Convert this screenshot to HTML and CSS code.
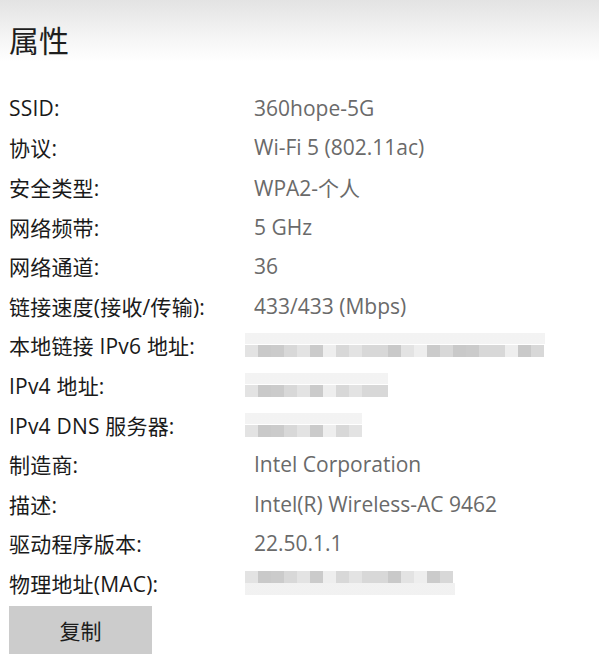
FILE: index.html
```html
<!DOCTYPE html>
<html lang="zh-CN">
<head>
<meta charset="utf-8">
<link rel="stylesheet" href="styles.css">
</head>
<body>
<div class="page">
  <h1 class="title">属性</h1>
  <dl class="props">
    <dt>SSID:</dt><dd>360hope-5G</dd>
    <dt>协议:</dt><dd>Wi-Fi 5 (802.11ac)</dd>
    <dt>安全类型:</dt><dd>WPA2-个人</dd>
    <dt>网络频带:</dt><dd>5 GHz</dd>
    <dt>网络通道:</dt><dd>36</dd>
    <dt>链接速度(接收/传输):</dt><dd>433/433 (Mbps)</dd>
    <dt>本地链接 IPv6 地址:</dt><dd class="masked"><span class="blur blur-v6"><i></i><i></i><i></i><i></i><i></i><i></i><i></i><i></i><i></i><i></i><i></i><i></i><i></i><i></i><i></i><i></i><i></i><i></i><i></i><i></i><i></i><i></i><i></i></span></dd>
    <dt>IPv4 地址:</dt><dd class="masked"><span class="blur blur-v4"><i></i><i></i><i></i><i></i><i></i><i></i><i></i><i></i><i></i><i></i><i></i></span></dd>
    <dt>IPv4 DNS 服务器:</dt><dd class="masked"><span class="blur blur-dns"><i></i><i></i><i></i><i></i><i></i><i></i><i></i><i></i><i></i></span></dd>
    <dt>制造商:</dt><dd>Intel Corporation</dd>
    <dt>描述:</dt><dd>Intel(R) Wireless-AC 9462</dd>
    <dt>驱动程序版本:</dt><dd>22.50.1.1</dd>
    <dt>物理地址(MAC):</dt><dd class="masked"><span class="blur blur-mac"><i></i><i></i><i></i><i></i><i></i><i></i><i></i><i></i><i></i><i></i><i></i><i></i><i></i><i></i><i></i><i></i></span></dd>
  </dl>
  <button class="copy" type="button">复制</button>
</div>
</body>
</html>
```

FILE: styles.css
```css
html, body {
  margin: 0;
  padding: 0;
  background: #ffffff;
}

body {
  width: 599px;
  height: 666px;
  overflow: hidden;
  background: linear-gradient(to bottom, #e3e3e3 0px, #f4f4f4 35px, #ffffff 62px, #ffffff 100%);
  font-family: "Open Sans", "Noto Sans CJK SC", sans-serif;
  color: #1c1c1c;
}

.page {
  padding: 17px 0 0 9px;
}

.title {
  margin: 0;
  font-family: "Noto Sans CJK SC", sans-serif;
  font-weight: 400;
  font-size: 30px;
  line-height: 44px;
  color: #1e1e1e;
}

.props {
  margin: 27px 0 0 0;
  display: grid;
  grid-template-columns: 236px 1fr;
  grid-auto-rows: 39.6px;
  align-items: center;
  font-size: 21px;
}

.props dt,
.props dd {
  margin: 0;
  white-space: nowrap;
}

.props dt {
  color: #1a1a1a;
  letter-spacing: 0.2px;
}

.props dd {
  color: #6a6a6a;
  padding-left: 9px;
}

.props dd.masked {
  padding-left: 0;
}

.blur {
  display: flex;
  height: 24px;
  align-items: flex-end;
  background: linear-gradient(to bottom, rgba(238,238,238,0.7) 0%, rgba(238,238,238,0.7) 45%, transparent 45%);
}

.blur i {
  display: block;
  width: 13px;
  height: 12px;
  background: #d8d8d8;
}

.blur i:nth-child(3n) { background: #cbcbcb; }
.blur i:nth-child(4n+1) { background: #e3e3e3; }
.blur i:nth-child(5n+2) { background: #c9c9c9; }
.blur i:nth-child(7n) { background: #eeeeee; }

.blur-v6 { width: 300px; }
.blur-v4 { width: 143px; }
.blur-dns { width: 117px; }
.blur-mac {
  width: 210px;
  align-items: flex-start;
  background: linear-gradient(to bottom, transparent 50%, rgba(238,238,238,0.8) 50%);
}

.copy {
  margin-top: 3px;
  width: 143px;
  height: 48px;
  border: none;
  background: #cccccc;
  font-family: "Noto Sans CJK SC", sans-serif;
  font-size: 21px;
  color: #1c1c1c;
  padding: 0;
}
```
